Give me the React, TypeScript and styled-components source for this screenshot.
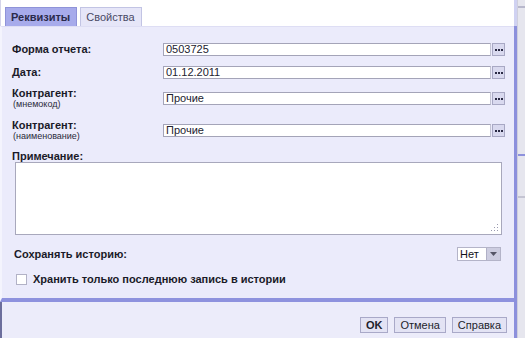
import styled, { createGlobalStyle } from "styled-components"

const GlobalStyle = createGlobalStyle`
  body {
    margin: 0;
    background: #ffffff;
    font-family: "Liberation Sans", Arial, sans-serif;
    font-size: 11px;
    color: #1d1d2b;
  }
`

const fields = [
  { label: "Форма отчета:", value: "0503725", mt: 11 },
  { label: "Дата:", value: "01.12.2011", mt: 1 },
  { label: "Контрагент:", hint: "(мнемокод)", value: "Прочие", mt: 2 },
  { label: "Контрагент:", hint: "(наименование)", value: "Прочие", mt: 6 },
]

function DotsIcon() {
  return (
    <svg width="8" height="2" viewBox="0 0 8 2">
      <rect x="0" y="0" width="2" height="2" fill="#2a2a44" />
      <rect x="3" y="0" width="2" height="2" fill="#2a2a44" />
      <rect x="6" y="0" width="2" height="2" fill="#2a2a44" />
    </svg>
  )
}

function App() {
  return (
    <Screen>
      <GlobalStyle />
      <Window>
        <TabBar>
          <Tab $active>Реквизиты</Tab>
          <Tab>Свойства</Tab>
        </TabBar>
        <Frame>
          <Body>
            {fields.map((f, i) => (
              <Row key={i} $mt={f.mt} $h={f.hint ? 26 : 22}>
                <LabelBox>
                  <Label>{f.label}</Label>
                  {f.hint && <Hint>{f.hint}</Hint>}
                </LabelBox>
                <InputGroup>
                  <Input>{f.value}</Input>
                  <PickButton><DotsIcon /></PickButton>
                </InputGroup>
              </Row>
            ))}
            <NoteLabel>Примечание:</NoteLabel>
            <NoteArea>
              <Grip width="8" height="8" viewBox="0 0 8 8">
                <rect x="6" y="0" width="1" height="1" fill="#9a9ab0" />
                <rect x="3" y="3" width="1" height="1" fill="#9a9ab0" />
                <rect x="6" y="3" width="1" height="1" fill="#9a9ab0" />
                <rect x="0" y="6" width="1" height="1" fill="#9a9ab0" />
                <rect x="3" y="6" width="1" height="1" fill="#9a9ab0" />
                <rect x="6" y="6" width="1" height="1" fill="#9a9ab0" />
              </Grip>
            </NoteArea>
            <HistoryRow>
              <Label>Сохранять историю:</Label>
              <Select>
                <SelectValue>Нет</SelectValue>
                <SelectArrow>
                  <svg width="7" height="4" viewBox="0 0 7 4">
                    <polygon points="0,0 7,0 3.5,4" fill="#555566" />
                  </svg>
                </SelectArrow>
              </Select>
            </HistoryRow>
            <CheckRow>
              <CheckBox />
              <Label>Хранить только последнюю запись в истории</Label>
            </CheckRow>
          </Body>
          <Footer>
            <Button $bold>OK</Button>
            <Button>Отмена</Button>
            <Button>Справка</Button>
          </Footer>
        </Frame>
      </Window>
      <SideStrip>
        <StripMark $top={6} $color="#b8b8cc" />
        <StripMark $top={146} $color="#8e92dc" />
        <StripMark $top={40} $color="#c4c4d2" />
      </SideStrip>
    </Screen>
  )
}

const Screen = styled.div`
  display: flex;
  width: 525px;
  height: 338px;
  overflow: hidden;
`

const Window = styled.div`
  width: 518px;
  display: flex;
  flex-direction: column;
`

const TabBar = styled.div`
  height: 26px;
  box-sizing: border-box;
  display: flex;
  align-items: flex-end;
  gap: 3px;
  padding: 7px 0 0 4px;
  background: #ffffff;
  border-left: 1px solid #d4d4ea;
  border-right: 3px solid #d0d2f2;
`

const Tab = styled.div<{ $active?: boolean }>`
  height: 19px;
  box-sizing: border-box;
  display: flex;
  align-items: center;
  padding: 0 6px 0 5px;
  border: 1px solid ${p => (p.$active ? "#8f93d8" : "#c2c4e4")};
  border-bottom: none;
  background: ${p => (p.$active ? "#a7abeb" : "#e6e6f8")};
  color: ${p => (p.$active ? "#2a2a4a" : "#4a4a66")};
  font-weight: ${p => (p.$active ? "bold" : "normal")};
  font-size: 11px;
`

const Frame = styled.div`
  flex: 1;
  display: flex;
  flex-direction: column;
  border-right: 3px solid #8c90dc;
`

const Body = styled.div`
  height: 276px;
  box-sizing: border-box;
  display: flex;
  flex-direction: column;
  padding: 0 9px 0 10px;
  background: #ebebfb;
  border-left: 2px solid #f4f4fd;
  border-top: 1px solid #dedef4;
  border-bottom: 4px solid #8e92de;
`

const Row = styled.div<{ $mt: number; $h: number }>`
  display: grid;
  grid-template-columns: 151px 1fr;
  align-items: center;
  height: ${p => p.$h}px;
  margin-top: ${p => p.$mt}px;
`

const LabelBox = styled.div`
  display: flex;
  flex-direction: column;
`

const Label = styled.span`
  font-weight: bold;
  font-size: 11px;
  line-height: 12px;
  color: #1a1a28;
  white-space: nowrap;
`

const Hint = styled.span`
  font-size: 9px;
  line-height: 10px;
  color: #2a2a3a;
  padding-left: 1px;
`

const InputGroup = styled.div`
  display: flex;
  align-items: center;
  gap: 1px;
`

const Input = styled.div`
  flex: 1;
  height: 13px;
  box-sizing: border-box;
  border: 1px solid #a4a4b8;
  border-right-color: #c4c4d4;
  background: #ffffff;
  font-size: 11px;
  line-height: 11px;
  padding-left: 2px;
  color: #222230;
`

const PickButton = styled.div`
  width: 13px;
  height: 13px;
  box-sizing: border-box;
  display: flex;
  align-items: center;
  justify-content: center;
  padding-top: 1px;
  background: #d9d9ef;
  border: 1px solid #a8a8c4;
`

const NoteLabel = styled.div`
  margin-top: 8px;
  height: 11px;
  font-weight: bold;
  font-size: 11px;
  line-height: 11px;
  color: #1a1a28;
`

const NoteArea = styled.div`
  position: relative;
  height: 73px;
  margin: 0 3px 0 3px;
  box-sizing: border-box;
  background: #ffffff;
  border: 1px solid #a8a8bc;
`

const Grip = styled.svg`
  position: absolute;
  right: 2px;
  bottom: 2px;
`

const HistoryRow = styled.div`
  display: flex;
  align-items: center;
  justify-content: space-between;
  height: 18px;
  margin-top: 10px;
  padding: 0 4px 0 2px;
`

const Select = styled.div`
  display: flex;
  height: 14px;
  box-sizing: border-box;
  border: 1px solid #b4b4c8;
  background: #ffffff;
`

const SelectValue = styled.span`
  width: 26px;
  font-size: 11px;
  line-height: 12px;
  padding-left: 2px;
  color: #111118;
`

const SelectArrow = styled.span`
  width: 13px;
  display: flex;
  align-items: center;
  justify-content: center;
  background: #cdcde0;
  border-left: 1px solid #b0b0c6;
`

const CheckRow = styled.div`
  display: flex;
  align-items: center;
  gap: 6px;
  height: 16px;
  margin-top: 8px;
  padding-left: 4px;
`

const CheckBox = styled.span`
  width: 11px;
  height: 11px;
  box-sizing: border-box;
  background: #ffffff;
  border: 1px solid #b2b2c6;
`

const Footer = styled.div`
  flex: 1;
  display: flex;
  justify-content: flex-end;
  align-items: flex-start;
  gap: 6px;
  padding: 15px 7px 0 0;
  background: #ececfa;
  border-left: 2px solid #6c6e9c;
`

const Button = styled.div<{ $bold?: boolean }>`
  height: 16px;
  box-sizing: border-box;
  display: flex;
  align-items: center;
  padding: 0 5px;
  background: #e3e3f4;
  border: 1px solid #a9a9c8;
  font-size: 11px;
  font-weight: ${p => (p.$bold ? "bold" : "normal")};
  color: #1e1e2c;
`

const SideStrip = styled.div`
  width: 7px;
  display: flex;
  flex-direction: column;
  background: #e6e6ee;
  border-left: 1px solid #cfcfdd;
`

const StripMark = styled.div<{ $top: number; $color: string }>`
  height: 2px;
  margin-top: ${p => p.$top}px;
  background: ${p => p.$color};
`

export default App
